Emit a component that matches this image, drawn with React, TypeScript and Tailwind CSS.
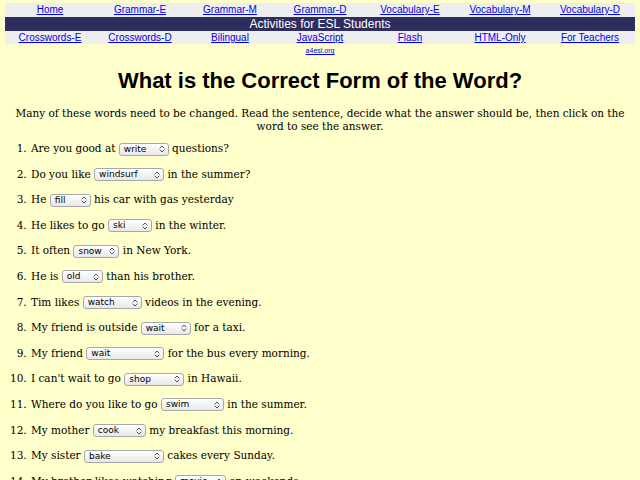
import React from 'react';

const topLinks = ['Home', 'Grammar-E', 'Grammar-M', 'Grammar-D', 'Vocabulary-E', 'Vocabulary-M', 'Vocabulary-D'];
const bottomLinks = ['Crosswords-E', 'Crosswords-D', 'Bilingual', 'JavaScript', 'Flash', 'HTML-Only', 'For Teachers'];

type Item = { before: string; word: string; width: string; after: string };

const items: Item[] = [
  { before: 'Are you good at', word: 'write', width: 'w-[50px]', after: 'questions?' },
  { before: 'Do you like', word: 'windsurf', width: 'w-[70px]', after: 'in the summer?' },
  { before: 'He', word: 'fill', width: 'w-[41px]', after: 'his car with gas yesterday' },
  { before: 'He likes to go', word: 'ski', width: 'w-[44px]', after: 'in the winter.' },
  { before: 'It often', word: 'snow', width: 'w-[46px]', after: 'in New York.' },
  { before: 'He is', word: 'old', width: 'w-[41px]', after: 'than his brother.' },
  { before: 'Tim likes', word: 'watch', width: 'w-[59px]', after: 'videos in the evening.' },
  { before: 'My friend is outside', word: 'wait', width: 'w-[50px]', after: 'for a taxi.' },
  { before: 'My friend', word: 'wait', width: 'w-[78px]', after: 'for the bus every morning.' },
  { before: "I can't wait to go", word: 'shop', width: 'w-[60px]', after: 'in Hawaii.' },
  { before: 'Where do you like to go', word: 'swim', width: 'w-[63px]', after: 'in the summer.' },
  { before: 'My mother', word: 'cook', width: 'w-[53px]', after: 'my breakfast this morning.' },
  { before: 'My sister', word: 'bake', width: 'w-[80px]', after: 'cakes every Sunday.' },
  { before: 'My brother likes watching', word: 'movie', width: 'w-[51px]', after: 'on weekends.' },
];

// small up/down chevrons like the native select arrow
const UpDown = () => (
  <svg width="6" height="8" viewBox="0 0 6 8" fill="none" stroke="#555" strokeWidth="1" strokeLinecap="round" strokeLinejoin="round">
    <path d="M1 3 L3 1 L5 3" />
    <path d="M1 5 L3 7 L5 5" />
  </svg>
);

const Dropdown = ({ word, width }: { word: string; width: string }) => (
  <span
    className={`${width} inline-flex h-[13px] items-center justify-between rounded-[3px] border border-[#a8a8a8] bg-gradient-to-b from-white to-[#e8e8e8] pl-[4px] pr-[3px] align-middle font-['DejaVu_Sans',sans-serif] text-[9px] leading-[11px] text-black`}
  >
    <span>{word}</span>
    <UpDown />
  </span>
);

const App = () => {
  return (
    <div className="min-h-screen bg-[#ffffcc] pt-[3px] font-['DejaVu_Serif',serif] text-black">
      {/* navigation table */}
      <div className="mx-[5px] font-['Liberation_Sans',Arial,sans-serif] text-[10px]">
        <div className="grid grid-cols-7 bg-[#eeeeee] h-[14px] items-center">
          {topLinks.map((l) => (
            <a key={l} href="#" className="text-center text-[#0000ee] underline leading-[14px]">{l}</a>
          ))}
        </div>
        <div className="bg-[#2e2e5e] h-[14px] text-center text-white text-[12px] leading-[14px]">
          Activities for ESL Students
        </div>
        <div className="grid grid-cols-7 bg-[#eeeeee] h-[13px] items-center">
          {bottomLinks.map((l) => (
            <a key={l} href="#" className="text-center text-[#0000ee] underline leading-[13px]">{l}</a>
          ))}
        </div>
        <div className="text-center leading-[9px] mt-[1px]">
          <a href="#" className="text-[7px] text-[#0000ee] underline">a4esl.org</a>
        </div>
      </div>

      {/* title */}
      <h1 className="mt-[12px] text-center font-['Liberation_Sans',Arial,sans-serif] font-bold text-[22px] leading-[28px]">
        What is the Correct Form of the Word?
      </h1>

      <p className="mt-[12px] px-[14px] text-center text-[10.5px] leading-[13px]">
        Many of these words need to be changed. Read the sentence, decide what the answer should be, then click on the word to see the answer.
      </p>

      <ol className="mt-[7px] list-decimal pl-[30px] text-[10.5px]">
        {items.map((it, i) => (
          <li key={i} className="h-[25.6px] leading-[16px] pl-[1px]">
            {it.before} <Dropdown word={it.word} width={it.width} /> {it.after}
          </li>
        ))}
      </ol>
    </div>
  );
};

export default App;
